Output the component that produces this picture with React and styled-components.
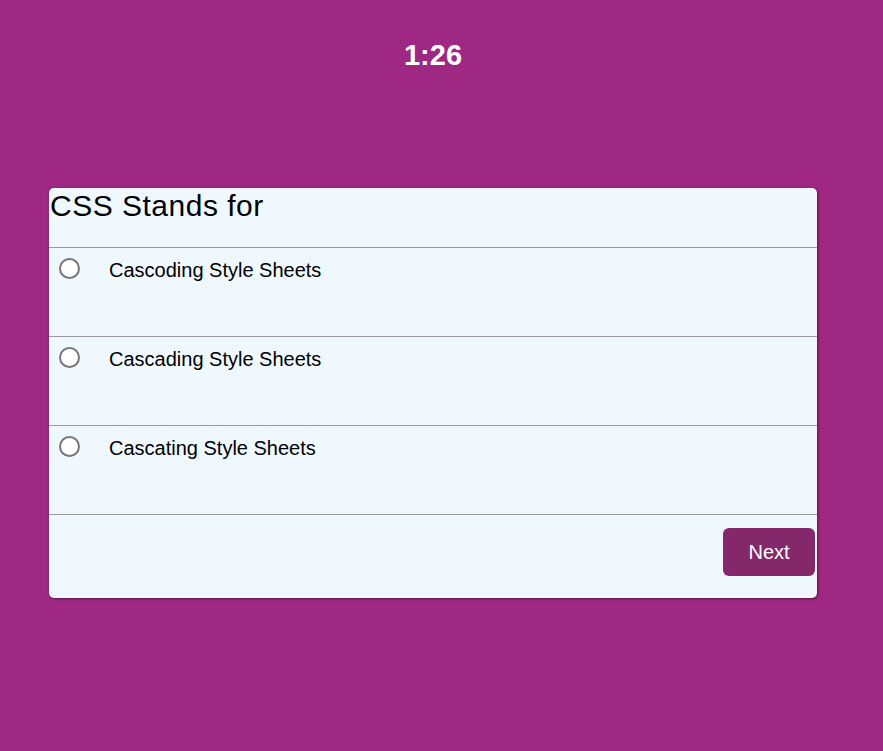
import React, { useState } from "react";
import styled, { createGlobalStyle } from "styled-components";

const Global = createGlobalStyle`
  html, body { margin: 0; padding: 0; background: #9e2882; }
  body { font-family: "Liberation Sans", Arial, sans-serif; }
`;

const Page = styled.div`
  min-height: 751px;
  box-sizing: border-box;
  padding-right: 17px;
  display: flex;
  flex-direction: column;
  align-items: center;
`;

const Timer = styled.div`
  margin-top: 38px;
  color: #fff;
  font-weight: bold;
  font-size: 29px;
  line-height: 34px;
`;

const Card = styled.div`
  margin-top: 116px;
  width: 768px;
  background: #f0f8ff;
  border-radius: 5px;
  box-shadow: 1px 1px 3px rgba(0, 0, 0, 0.45);
  overflow: hidden;
`;

const Title = styled.h2`
  margin: 0;
  padding: 0 0 0 1px;
  height: 60px;
  box-sizing: border-box;
  font-size: 30px;
  letter-spacing: 0.5px;
  line-height: 36px;
  font-weight: normal;
  color: #000;
  border-bottom: 1px solid #9a9a9a;
`;

const Option = styled.label`
  display: flex;
  align-items: flex-start;
  height: 88px;
  box-sizing: content-box;
  border-bottom: 1px solid #9a9a9a;
  cursor: pointer;
`;

const Radio = styled.input`
  appearance: none;
  margin: 10px 0 0 10px;
  width: 21px;
  height: 21px;
  border: 2px solid #767676;
  border-radius: 50%;
  background: #fff;
  box-sizing: border-box;
  flex-shrink: 0;
  &:checked {
    border-color: #0075ff;
    background: radial-gradient(circle, #0075ff 45%, #fff 50%);
  }
`;

const OptionText = styled.span`
  margin: 10px 0 0 29px;
  font-size: 20px;
  line-height: 24px;
  color: #000;
`;

const Footer = styled.div`
  height: 83px;
  display: flex;
  justify-content: flex-end;
  align-items: flex-start;
  padding: 13px 2px 0 0;
  box-sizing: border-box;
`;

const NextButton = styled.button`
  width: 92px;
  height: 48px;
  border: none;
  border-radius: 6px;
  background: #85286b;
  color: #fff;
  font-family: "Liberation Sans", Arial, sans-serif;
  font-size: 20px;
  cursor: pointer;
`;

const options = [
  "Cascoding Style Sheets",
  "Cascading Style Sheets",
  "Cascating Style Sheets",
];

export default function App() {
  const [sel, setSel] = useState(null);
  return (
    <>
      <Global />
      <Page>
        <Timer>1:26</Timer>
        <Card>
          <Title>CSS Stands for</Title>
          {options.map((o, i) => (
            <Option key={o}>
              <Radio
                type="radio"
                name="q"
                checked={sel === i}
                onChange={() => setSel(i)}
              />
              <OptionText>{o}</OptionText>
            </Option>
          ))}
          <Footer>
            <NextButton>Next</NextButton>
          </Footer>
        </Card>
      </Page>
    </>
  );
}
